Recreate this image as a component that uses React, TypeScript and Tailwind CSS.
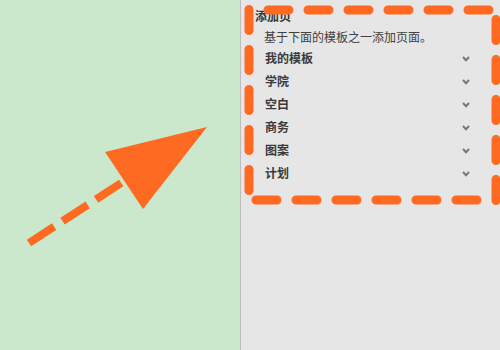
import React from 'react';

const templates = ['我的模板', '学院', '空白', '商务', '图案', '计划'];

const Chevron = () => (
    <svg width="8" height="6" viewBox="0 0 8 6" className="mt-[2px]">
        <polyline points="1,1 4,4.2 7,1" fill="none" stroke="#777777" strokeWidth="2"/>
    </svg>
);

const App: React.FC = () => {
    return (
        <div
            className="relative w-[500px] h-[350px] flex overflow-hidden"
            style={{fontFamily: '"Noto Sans CJK SC", "Noto Sans", sans-serif'}}
        >
            {/* left preview */}
            <div className="w-[240px] h-full bg-[#cce8cc]"/>

            {/* side panel */}
            <div className="flex-1 h-full bg-[#e6e6e6] border-l border-[#bdbdbd] pl-[14px] pt-[7px]">
                <h2 className="text-[12px] leading-[18px] font-semibold text-[#333333]">添加页</h2>
                <p className="mt-[3px] pl-[9px] text-[12px] leading-[18px] text-[#404040]">
                    基于下面的模板之一添加页面。
                </p>
                <ul className="pl-[10px]">
                    {templates.map((name) => (
                        <li key={name} className="w-[205px] h-[23px] flex items-center justify-between">
                            <span className="text-[12px] font-bold text-[#3a3a3a]">{name}</span>
                            <Chevron/>
                        </li>
                    ))}
                </ul>
            </div>

            {/* annotation overlay */}
            <svg className="absolute inset-0 pointer-events-none" width="500" height="350">
                <g stroke="#ff6a22" strokeWidth="9" strokeLinecap="round" strokeDasharray="21 19" fill="none">
                    <line x1="249" y1="9.5" x2="249" y2="190.5"/>
                    <line x1="268" y1="10" x2="489" y2="10"/>
                    <line x1="496" y1="19.5" x2="496" y2="200.5"/>
                    <line x1="256" y1="200" x2="477" y2="200"/>
                </g>
                <line x1="29" y1="243" x2="121.2" y2="183" stroke="#ff6a22" strokeWidth="8" strokeDasharray="30 10"/>
                <polygon points="105,152 207,127 143,209" fill="#ff6a22"/>
            </svg>
        </div>
    );
};

export default App;
